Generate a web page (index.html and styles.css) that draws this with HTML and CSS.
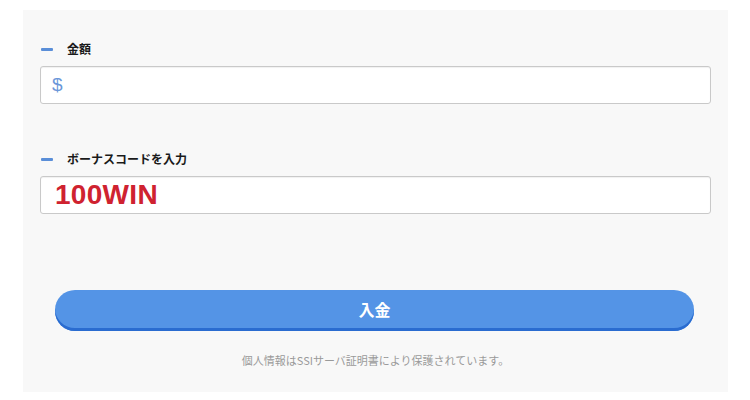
FILE: index.html
```html
<!DOCTYPE html>
<html lang="ja">
<head>
<meta charset="utf-8">
<link rel="stylesheet" href="styles.css">
</head>
<body>
<div class="panel">
  <div class="label"><span class="dash"></span><span class="label-text">金額</span></div>
  <div class="field field-amount"><span class="currency">$</span></div>
  <div class="label label-second"><span class="dash"></span><span class="label-text">ボーナスコードを入力</span></div>
  <div class="field field-code"><span class="code">100WIN</span></div>
  <button class="submit">入金</button>
  <p class="note">個人情報はSSIサーバ証明書により保護されています。</p>
</div>
</body>
</html>
```

FILE: styles.css
```css
html, body {
  margin: 0;
  padding: 0;
  background: #ffffff;
}
body {
  font-family: "Noto Sans CJK JP", "Liberation Sans", sans-serif;
}
.panel {
  margin: 10px 22px 0 23px;
  height: 382px;
  box-sizing: border-box;
  background: #f8f8f8;
  padding: 31px 17px 0 17px;
}
.label {
  display: flex;
  align-items: center;
  height: 16px;
  padding-left: 1px;
}
.dash {
  display: block;
  width: 12px;
  height: 3px;
  background: #5a8ed8;
  border-radius: 1px;
}
.label-text {
  margin-left: 14px;
  font-size: 12px;
  font-weight: 700;
  color: #1a1a1a;
  line-height: 16px;
}
.label-second {
  margin-top: 47px;
}
.field {
  margin-top: 9px;
  height: 38px;
  box-sizing: border-box;
  background: #ffffff;
  border: 1px solid #c9c9c9;
  border-radius: 3px;
  box-shadow: inset 0 1px 1px rgba(0,0,0,0.06);
  display: flex;
  align-items: center;
}
.currency {
  margin-left: 11px;
  font-family: "Liberation Sans", sans-serif;
  font-size: 19px;
  color: #6b97d9;
}
.code {
  margin-left: 14px;
  font-family: "Liberation Sans", sans-serif;
  font-weight: 700;
  font-size: 28px;
  color: #cf2230;
  letter-spacing: 0.3px;
}
.submit {
  display: block;
  margin: 76px 17px 0 15px;
  width: calc(100% - 32px);
  height: 41px;
  border: none;
  border-radius: 20px;
  background: #5494e6;
  box-shadow: inset 0 -3px 0 #2a6cd0;
  color: #ffffff;
  font-family: "Noto Sans CJK JP", "Liberation Sans", sans-serif;
  font-size: 16px;
  font-weight: 700;
  padding: 0 0 3px 0;
}
.note {
  margin: 21px 0 0 0;
  text-align: center;
  font-size: 11px;
  line-height: 16px;
  color: #9a9a9a;
}
```
